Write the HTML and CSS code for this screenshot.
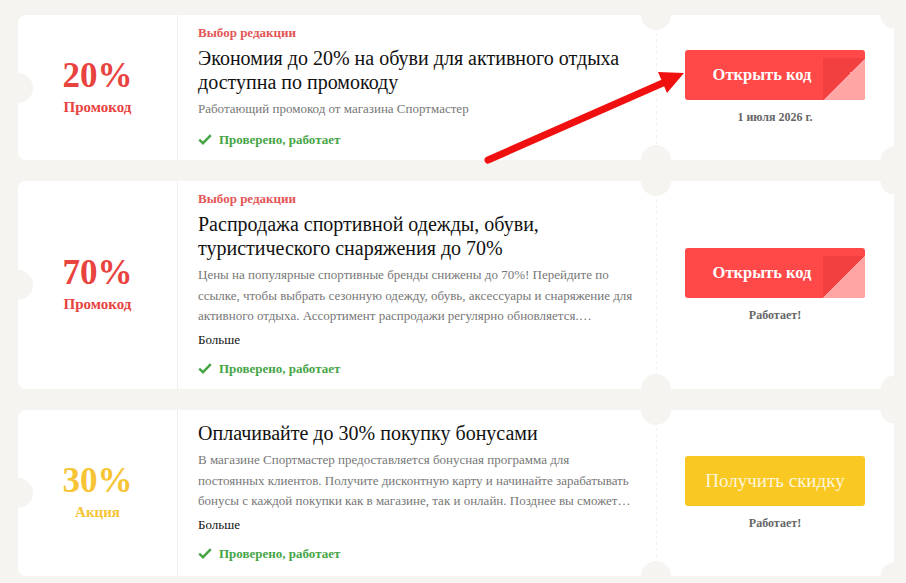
FILE: index.html
```html
<!DOCTYPE html>
<html lang="ru">
<head>
<meta charset="utf-8">
<title>Промокоды Спортмастер</title>
<link rel="stylesheet" href="styles.css">
</head>
<body>
<div class="list">
  <div class="card card-1">
    <div class="left">
      <div class="pct red">20%</div>
      <div class="type red">Промокод</div>
    </div>
    <div class="mid">
      <div class="label">Выбор редакции</div>
      <div class="title">Экономия до 20% на обуви для активного отдыха доступна по промокоду</div>
      <div class="desc">Работающий промокод от магазина Спортмастер</div>
      <div class="check"><svg width="14" height="11" viewBox="0 0 14 11"><path d="M1.2 5.6 L5 9.2 L12.8 1.2" fill="none" stroke="#46a546" stroke-width="2.4"/></svg><span>Проверено, работает</span></div>
    </div>
    <div class="right">
      <div class="btn btn-red">Открыть код<span class="fold"></span></div>
      <div class="note">1 июля 2026 г.</div>
    </div>
  </div>

  <div class="card card-2">
    <div class="left">
      <div class="pct red">70%</div>
      <div class="type red">Промокод</div>
    </div>
    <div class="mid">
      <div class="label">Выбор редакции</div>
      <div class="title">Распродажа спортивной одежды, обуви, туристического снаряжения до 70%</div>
      <div class="desc">Цены на популярные спортивные бренды снижены до 70%! Перейдите по ссылке, чтобы выбрать сезонную одежду, обувь, аксессуары и снаряжение для активного отдыха. Ассортимент распродажи регулярно обновляется.…</div>
      <div class="more">Больше</div>
      <div class="check"><svg width="14" height="11" viewBox="0 0 14 11"><path d="M1.2 5.6 L5 9.2 L12.8 1.2" fill="none" stroke="#46a546" stroke-width="2.4"/></svg><span>Проверено, работает</span></div>
    </div>
    <div class="right">
      <div class="btn btn-red">Открыть код<span class="fold"></span></div>
      <div class="note">Работает!</div>
    </div>
  </div>

  <div class="card card-3">
    <div class="left">
      <div class="pct yellow">30%</div>
      <div class="type yellow">Акция</div>
    </div>
    <div class="mid mid-nolabel">
      <div class="title">Оплачивайте до 30% покупку бонусами</div>
      <div class="desc">В магазине Спортмастер предоставляется бонусная программа для постоянных клиентов. Получите дисконтную карту и начинайте зарабатывать бонусы с каждой покупки как в магазине, так и онлайн. Позднее вы сможет…</div>
      <div class="more">Больше</div>
      <div class="check"><svg width="14" height="11" viewBox="0 0 14 11"><path d="M1.2 5.6 L5 9.2 L12.8 1.2" fill="none" stroke="#46a546" stroke-width="2.4"/></svg><span>Проверено, работает</span></div>
    </div>
    <div class="right">
      <div class="btn btn-yellow">Получить скидку</div>
      <div class="note">Работает!</div>
    </div>
  </div>
</div>

<svg class="arrow" width="906" height="583" viewBox="0 0 906 583">
  <line x1="488" y1="160" x2="664" y2="82.5" stroke="#f01010" stroke-width="7" stroke-linecap="round"/>
  <polygon points="684,73 658,72 667,93" fill="#f01010"/>
</svg>
</body>
</html>
```

FILE: styles.css
```css
* { box-sizing: border-box; }

body {
  margin: 0;
  background: #f5f4f0;
  font-family: "Liberation Serif", "Times New Roman", serif;
  color: #111;
  position: relative;
  width: 906px;
  height: 583px;
  overflow: hidden;
}

.list {
  display: flex;
  flex-direction: column;
  gap: 21px;
  padding: 15px 0 0 18px;
  width: 894px;
}

.card {
  display: flex;
  background: #fff;
  border-radius: 8px;
  position: relative;
  overflow: hidden;
}

.card-1 { min-height: 145px; }
.card-2 { min-height: 208px; }
.card-3 { min-height: 166px; }

/* ticket notch on the left edge */
.card::before {
  content: "";
  position: absolute;
  left: -15px;
  top: 50%;
  width: 30px;
  height: 30px;
  margin-top: -15px;
  border-radius: 50%;
  background: #f5f4f0;
}

.left {
  width: 160px;
  flex: none;
  border-right: 1px solid #efefef;
  display: flex;
  flex-direction: column;
  align-items: center;
  justify-content: center;
  padding-bottom: 2px;
}

.pct {
  font-size: 35px;
  font-weight: bold;
  line-height: 40px;
}

.type {
  font-size: 15px;
  font-weight: bold;
  line-height: 22px;
}

.red { color: #e8433e; }
.yellow { color: #f6c435; }

.mid {
  flex: 1;
  padding: 9px 22px 11px 20px;
}

.mid-nolabel { padding-top: 11px; }

.label {
  font-size: 13px;
  font-weight: bold;
  color: #e35656;
  line-height: 18px;
  margin-bottom: 4px;
}

.title {
  font-size: 20px;
  line-height: 24px;
  color: #111;
}

.desc {
  font-size: 13px;
  line-height: 20.5px;
  color: #777;
  margin-top: 5px;
}

.more {
  font-size: 13px;
  line-height: 18px;
  color: #111;
  margin-top: 4px;
}

.check {
  display: flex;
  align-items: center;
  gap: 7px;
  margin-top: 11px;
  font-size: 13px;
  line-height: 18px;
  font-weight: bold;
  color: #46a546;
}

.right {
  width: 238px;
  flex: none;
  display: flex;
  flex-direction: column;
  align-items: center;
  justify-content: center;
  position: relative;
  background:
    radial-gradient(circle at 100% 0, #f5f4f0 13px, rgba(245,244,240,0) 14px),
    radial-gradient(circle at 100% 100%, #f5f4f0 13px, rgba(245,244,240,0) 14px),
    linear-gradient(#f3f2ef 50%, rgba(255,255,255,0) 50%) left top / 1px 6px repeat-y,
    #fff;
}

.right::before,
.right::after {
  content: "";
  position: absolute;
  left: -15px;
  width: 30px;
  height: 30px;
  border-radius: 50%;
  background: #f5f4f0;
}
.right::before { top: -15px; }
.right::after { bottom: -15px; }

.btn {
  width: 180px;
  height: 50px;
  border-radius: 3px;
  display: flex;
  align-items: center;
  justify-content: center;
  font-size: 16.5px;
  position: relative;
  overflow: hidden;
}

.btn-red {
  background: #ff4848;
  color: #fff;
  font-weight: bold;
  padding-right: 26px;
}

.fold {
  position: absolute;
  right: 0;
  bottom: 0;
  width: 42px;
  height: 42px;
  background: linear-gradient(to bottom right, #f23f3f 50%, #ffa6a4 50%);
}

.btn-yellow {
  background: #f9c823;
  color: #fff6da;
  font-size: 19px;
}

.note {
  margin-top: 9px;
  font-size: 12px;
  line-height: 16px;
  font-weight: bold;
  color: #666;
}

.arrow {
  position: absolute;
  left: 0;
  top: 0;
  pointer-events: none;
}
```
